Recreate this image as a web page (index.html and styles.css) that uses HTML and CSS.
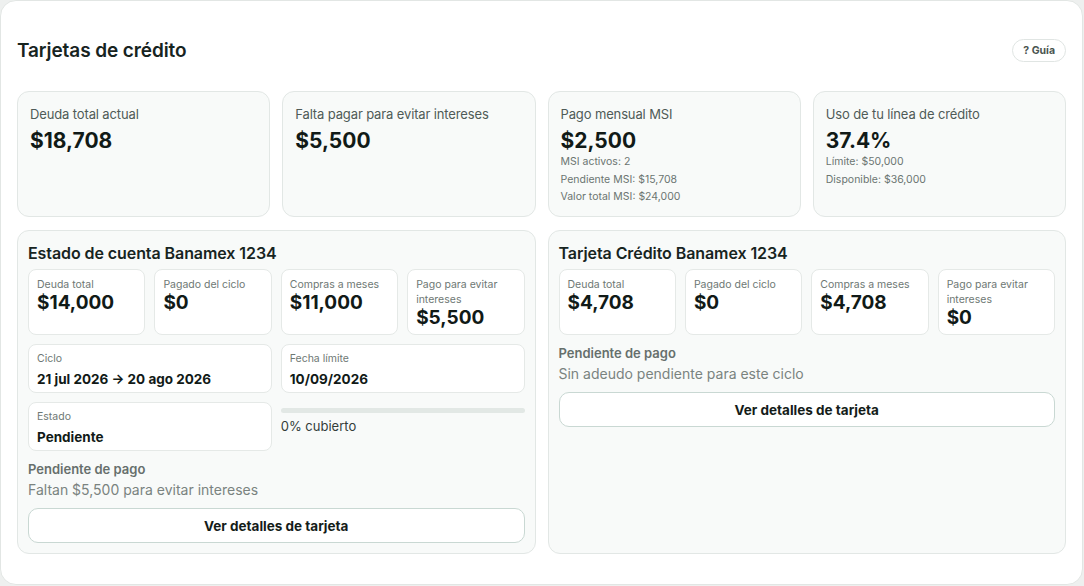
FILE: index.html
```html
<!DOCTYPE html>
<html lang="es">
<head>
<meta charset="utf-8">
<title>Tarjetas de crédito</title>
<link rel="stylesheet" href="styles.css">
</head>
<body>
<div class="shell">
  <header class="head">
    <h1 class="title">Tarjetas de crédito</h1>
    <button class="guide">? Guía</button>
  </header>

  <section class="summary">
    <div class="sum-card">
      <div class="sum-label">Deuda total actual</div>
      <div class="sum-value">$18,708</div>
    </div>
    <div class="sum-card">
      <div class="sum-label">Falta pagar para evitar intereses</div>
      <div class="sum-value">$5,500</div>
    </div>
    <div class="sum-card">
      <div class="sum-label">Pago mensual MSI</div>
      <div class="sum-value">$2,500</div>
      <div class="sum-sub">MSI activos: 2</div>
      <div class="sum-sub">Pendiente MSI: $15,708</div>
      <div class="sum-sub">Valor total MSI: $24,000</div>
    </div>
    <div class="sum-card">
      <div class="sum-label">Uso de tu línea de crédito</div>
      <div class="sum-value">37.4%</div>
      <div class="sum-sub">Límite: $50,000</div>
      <div class="sum-sub">Disponible: $36,000</div>
    </div>
  </section>

  <section class="panels">
    <article class="panel">
      <h2 class="panel-title">Estado de cuenta Banamex 1234</h2>
      <div class="stats">
        <div class="stat"><div class="stat-label">Deuda total</div><div class="stat-value">$14,000</div></div>
        <div class="stat"><div class="stat-label">Pagado del ciclo</div><div class="stat-value">$0</div></div>
        <div class="stat"><div class="stat-label">Compras a meses</div><div class="stat-value">$11,000</div></div>
        <div class="stat"><div class="stat-label">Pago para evitar intereses</div><div class="stat-value">$5,500</div></div>
      </div>
      <div class="pair">
        <div class="info"><div class="info-label">Ciclo</div><div class="info-value">21 jul 2026 → 20 ago 2026</div></div>
        <div class="info"><div class="info-label">Fecha límite</div><div class="info-value">10/09/2026</div></div>
      </div>
      <div class="pair">
        <div class="info"><div class="info-label">Estado</div><div class="info-value">Pendiente</div></div>
        <div class="progress">
          <div class="bar"><div class="bar-fill" style="width:0%"></div></div>
          <div class="bar-text">0% cubierto</div>
        </div>
      </div>
      <div class="pending">
        <div class="pending-title">Pendiente de pago</div>
        <div class="pending-text">Faltan $5,500 para evitar intereses</div>
      </div>
      <button class="details">Ver detalles de tarjeta</button>
    </article>

    <article class="panel">
      <h2 class="panel-title">Tarjeta Crédito Banamex 1234</h2>
      <div class="stats">
        <div class="stat"><div class="stat-label">Deuda total</div><div class="stat-value">$4,708</div></div>
        <div class="stat"><div class="stat-label">Pagado del ciclo</div><div class="stat-value">$0</div></div>
        <div class="stat"><div class="stat-label">Compras a meses</div><div class="stat-value">$4,708</div></div>
        <div class="stat"><div class="stat-label">Pago para evitar intereses</div><div class="stat-value">$0</div></div>
      </div>
      <div class="pending">
        <div class="pending-title">Pendiente de pago</div>
        <div class="pending-text">Sin adeudo pendiente para este ciclo</div>
      </div>
      <button class="details">Ver detalles de tarjeta</button>
    </article>
  </section>
</div>
</body>
</html>
```
FILE: styles.css
```css
* { box-sizing: border-box; }
html, body { margin: 0; padding: 0; }
body {
  background: #eef0ef;
  font-family: Inter, "Noto Sans", sans-serif;
  color: #141c19;
}
.shell {
  width: 1083px;
  height: 585px;
  background: #ffffff;
  border: 1px solid #e2e6e4;
  border-radius: 16px;
  padding: 36px 16px 0 16px;
}
.head {
  display: flex;
  justify-content: space-between;
  align-items: center;
  height: 26px;
}
.title {
  margin: 0;
  font-size: 19px;
  font-weight: 600;
  letter-spacing: -0.005em;
  color: #17241f;
}
.guide {
  font-family: inherit;
  height: 23px;
  padding: 0 10px;
  border: 1px solid #e0e5e3;
  border-radius: 12px;
  background: #fff;
  font-size: 10.5px;
  font-weight: 700;
  color: #4a5550;
}
.summary {
  margin-top: 28px;
  display: grid;
  grid-template-columns: repeat(4, 1fr);
  gap: 12px;
  height: 124px;
}
.sum-card {
  background: #f8faf9;
  border: 1px solid #e2e7e5;
  border-radius: 12px;
  padding: 13px 12px 10px 12px;
}
.sum-label {
  font-size: 13px;
  line-height: 18px;
  color: #4f5b57;
  letter-spacing: -0.01em;
}
.sum-value {
  margin-top: 5px;
  font-size: 21px;
  line-height: 25px;
  font-weight: 700;
  color: #111a17;
}
.sum-sub {
  font-size: 10.5px;
  line-height: 17.5px;
  color: #6b7571;
}
.panels {
  margin-top: 15px;
  display: grid;
  grid-template-columns: 1fr 1fr;
  gap: 12px;
  height: 324px;
}
.panel {
  background: #f8faf9;
  border: 1px solid #e2e7e5;
  border-radius: 12px;
  padding: 11px 10px 10px 10px;
  display: flex;
  flex-direction: column;
}
.panel-title {
  margin: 0;
  font-size: 16px;
  line-height: 22px;
  font-weight: 600;
  color: #17241f;
  letter-spacing: -0.005em;
}
.stats {
  margin-top: 5px;
  display: grid;
  grid-template-columns: repeat(4, 1fr);
  gap: 9px;
  height: 66px;
}
.stat {
  background: #fff;
  border: 1px solid #e5e9e7;
  border-radius: 8px;
  padding: 7px 8px 5px 8px;
}
.stat-label {
  font-size: 10.5px;
  line-height: 15px;
  color: #6e7874;
}
.stat-value {
  font-size: 19px;
  line-height: 22px;
  font-weight: 700;
  color: #111a17;
}
.pair {
  margin-top: 9px;
  display: grid;
  grid-template-columns: 1fr 1fr;
  gap: 9px;
  height: 49px;
}
.info {
  background: #fff;
  border: 1px solid #e5e9e7;
  border-radius: 8px;
  padding: 7px 8px 3px 8px;
}
.info-label {
  font-size: 10.5px;
  line-height: 14px;
  color: #6e7874;
}
.info-value {
  margin-top: 3px;
  font-size: 13.5px;
  line-height: 20px;
  font-weight: 700;
  color: #111a17;
}
.progress {
  padding-top: 6px;
}
.bar {
  height: 5px;
  border-radius: 3px;
  background: #e2e8e5;
  overflow: hidden;
}
.bar-fill {
  height: 100%;
  background: #2f8f6a;
}
.bar-text {
  margin-top: 4px;
  font-size: 13px;
  line-height: 18px;
  color: #333d39;
}
.pending {
  margin-top: 9px;
}
.pending-title {
  font-size: 13px;
  line-height: 18px;
  font-weight: 600;
  color: #666f6c;
}
.pending-text {
  margin-top: 2px;
  font-size: 14px;
  line-height: 20px;
  color: #7a8380;
}
.details {
  margin-top: 8px;
  height: 35px;
  width: 100%;
  font-family: inherit;
  font-size: 13.5px;
  font-weight: 700;
  color: #141c19;
  background: #fff;
  border: 1px solid #c9d8d3;
  border-radius: 10px;
}
```
